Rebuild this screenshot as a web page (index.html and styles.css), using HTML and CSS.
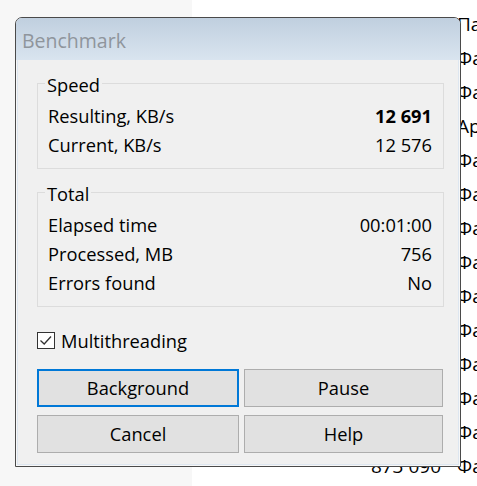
FILE: index.html
```
<!DOCTYPE html>
<html>
<head>
<meta charset="utf-8">
<link rel="stylesheet" href="styles.css">
</head>
<body>
<div class="side"></div>
<div class="list">
  <div class="list-row"><span class="num"></span><span class="name">Па</span></div>
  <div class="list-row"><span class="num"></span><span class="name">Фа</span></div>
  <div class="list-row"><span class="num"></span><span class="name">Фа</span></div>
  <div class="list-row"><span class="num"></span><span class="name">Ар</span></div>
  <div class="list-row"><span class="num"></span><span class="name">Фа</span></div>
  <div class="list-row"><span class="num"></span><span class="name">Фа</span></div>
  <div class="list-row"><span class="num"></span><span class="name">Фа</span></div>
  <div class="list-row"><span class="num"></span><span class="name">Фа</span></div>
  <div class="list-row"><span class="num"></span><span class="name">Фа</span></div>
  <div class="list-row"><span class="num"></span><span class="name">Фа</span></div>
  <div class="list-row"><span class="num"></span><span class="name">Фа</span></div>
  <div class="list-row"><span class="num"></span><span class="name">Фа</span></div>
  <div class="list-row"><span class="num"></span><span class="name">Фа</span></div>
  <div class="list-row"><span class="num">873 090</span><span class="name">Фа</span></div>
</div>

<div class="dialog">
  <div class="titlebar">Benchmark</div>
  <div class="content">
    <div class="group">
      <div class="group-title">Speed</div>
      <div class="rows">
        <div class="row"><span>Resulting, KB/s</span><span class="strong">12 691</span></div>
        <div class="row"><span>Current, KB/s</span><span>12 576</span></div>
      </div>
    </div>
    <div class="group group-second">
      <div class="group-title">Total</div>
      <div class="rows">
        <div class="row"><span>Elapsed time</span><span>00:01:00</span></div>
        <div class="row"><span>Processed, MB</span><span>756</span></div>
        <div class="row"><span>Errors found</span><span>No</span></div>
      </div>
    </div>
    <label class="check">
      <svg class="check-box" width="18" height="17" viewBox="0 0 18 17">
        <rect x="0.5" y="0.5" width="17" height="16" fill="#ffffff" stroke="#333333"/>
        <path d="M3.5 8.5 L7.2 12 L14 4.5" fill="none" stroke="#333333" stroke-width="1.3"/>
      </svg>
      <span>Multithreading</span>
    </label>
    <div class="buttons">
      <div class="btn btn-default">Background</div>
      <div class="btn">Pause</div>
      <div class="btn">Cancel</div>
      <div class="btn">Help</div>
    </div>
  </div>
</div>
</body>
</html>
```
FILE: styles.css
```
* {
  box-sizing: border-box;
  margin: 0;
  padding: 0;
}

html, body {
  width: 477px;
  height: 486px;
  overflow: hidden;
}

body {
  position: relative;
  display: flex;
  background: #ffffff;
  font-family: "Open Sans", "Noto Sans", sans-serif;
  font-size: 18.3px;
  color: #000000;
}

.side {
  width: 192px;
  flex: none;
  background: #f7f7f7;
}

.list {
  flex: 1;
  padding-top: 7px;
  font-size: 19px;
}

.list-row {
  display: flex;
  height: 34px;
  line-height: 34px;
  white-space: nowrap;
}

.num {
  width: 249px;
  flex: none;
  text-align: right;
}

.name {
  padding-left: 16px;
}

.dialog {
  position: absolute;
  left: 15px;
  top: 17px;
  width: 446px;
  height: 450px;
  border: 1px solid #4a4a4a;
  border-radius: 7px 7px 0 0;
  background: #f0f0f0;
  box-shadow: inset 0 0 0 1px #f7f7f7, inset 0 0 0 2px #dde6f0;
  overflow: hidden;
}

.titlebar {
  height: 42px;
  display: flex;
  align-items: center;
  padding-left: 6px;
  padding-top: 2px;
  background: linear-gradient(to bottom, #c0cfdf, #d9e4ef);
  color: #8f959c;
  font-size: 19.5px;
}

.content {
  padding: 23px 16px 0 21px;
}

.group {
  border: 1px solid #dcdcdc;
  padding: 0 11px 9px 10px;
}

.group-second {
  margin-top: 23px;
}

.group-title {
  margin: -11px 0 0 -3px;
  padding: 0 2px;
  width: fit-content;
  line-height: 24px;
  background: #f0f0f0;
}

.rows {
  margin-top: 4px;
}

.row {
  display: flex;
  justify-content: space-between;
  align-items: center;
  height: 29px;
}

.strong {
  font-weight: 700;
}

.check {
  display: flex;
  align-items: center;
  gap: 6px;
  height: 28px;
  margin-top: 19px;
}

.check-box {
  flex: none;
  display: block;
}

.buttons {
  display: grid;
  grid-template-columns: 202px 199px;
  grid-auto-rows: 38px;
  gap: 8px 5px;
  margin-top: 15px;
}

.btn {
  display: flex;
  align-items: center;
  justify-content: center;
  background: #e1e1e1;
  border: 1px solid #adadad;
  padding-bottom: 1px;
}

.btn-default {
  border: 2px solid #0078d7;
}
```
